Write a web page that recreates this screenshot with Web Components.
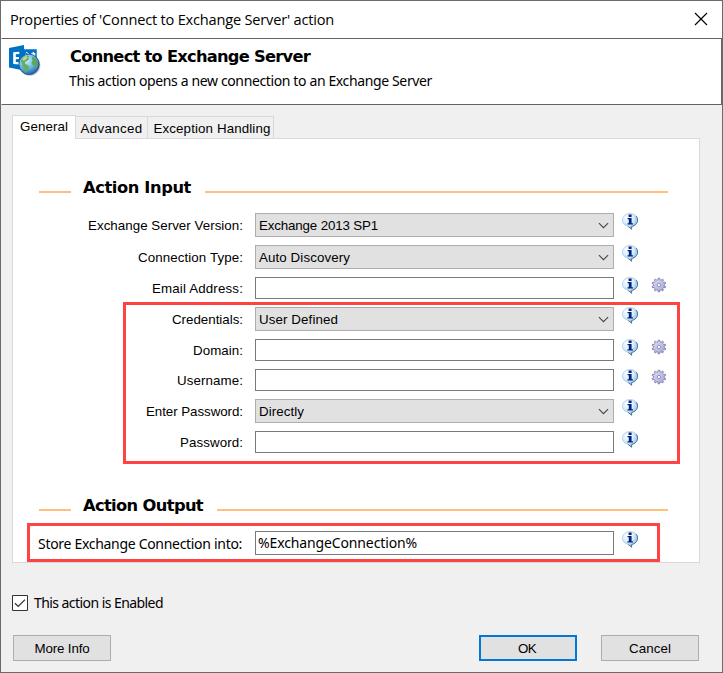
<!DOCTYPE html>
<html lang="en">
<head>
<meta charset="utf-8">
<title>Properties of 'Connect to Exchange Server' action</title>
<style>
html, body { margin: 0; height: 100%; overflow: hidden; }
body { font: 13.33px/16px "Liberation Sans", sans-serif; color: #000; }
.tahoma { font-family: "Noto Sans", sans-serif; font-size: 14px; }
.heading { font-family: "DejaVu Sans", sans-serif; font-weight: bold; font-size: 16.3px; }
</style>
</head>
<body>
<action-dialog>
  <fit-text slot="title" w="324" style="font-family:'Open Sans',sans-serif;font-size:14.6px">Properties of 'Connect to Exchange Server' action</fit-text>
  <fit-text slot="name" class="heading" w="240">Connect to Exchange Server</fit-text>
  <fit-text slot="about" class="tahoma" w="363" style="margin-left:-1px">This action opens a new connection to an Exchange Server</fit-text>

  <tab-label slot="tabs" active style="width:64px"><fit-text w="48">General</fit-text></tab-label>
  <tab-label slot="tabs" style="width:72px"><fit-text w="62">Advanced</fit-text></tab-label>
  <tab-label slot="tabs" style="width:126px"><fit-text w="117" style="margin-left:3px">Exception Handling</fit-text></tab-label>

  <section-title style="margin-top:38px"><fit-text class="heading" w="108">Action Input</fit-text></section-title>
  <form-rows style="margin-top:16px">
    <form-row><fit-text slot="label" w="155">Exchange Server Version:</fit-text><drop-down><fit-text w="119">Exchange 2013 SP1</fit-text></drop-down><info-icon></info-icon></form-row>
    <form-row><fit-text slot="label" w="105">Connection Type:</fit-text><drop-down><fit-text w="91">Auto Discovery</fit-text></drop-down><info-icon></info-icon></form-row>
    <form-row><fit-text slot="label" w="91">Email Address:</fit-text><text-field></text-field><info-icon></info-icon><gear-icon></gear-icon></form-row>
    <form-row><fit-text slot="label" w="71">Credentials:</fit-text><drop-down><fit-text w="79">User Defined</fit-text></drop-down><info-icon></info-icon></form-row>
    <form-row><fit-text slot="label" w="50">Domain:</fit-text><text-field></text-field><info-icon></info-icon><gear-icon></gear-icon></form-row>
    <form-row><fit-text slot="label" w="66">Username:</fit-text><text-field></text-field><info-icon></info-icon><gear-icon></gear-icon></form-row>
    <form-row><fit-text slot="label" w="97">Enter Password:</fit-text><drop-down><fit-text w="45">Directly</fit-text></drop-down><info-icon></info-icon></form-row>
    <form-row><fit-text slot="label" w="63">Password:</fit-text><text-field></text-field><info-icon></info-icon></form-row>
  </form-rows>
  <section-title style="margin-top:42px"><fit-text class="heading" w="120">Action Output</fit-text></section-title>
  <form-rows style="margin-top:16px">
    <form-row><fit-text slot="label" class="tahoma" w="204" style="margin-right:1px">Store Exchange Connection into:</fit-text><text-field tall><fit-text class="tahoma" w="159">%ExchangeConnection%</fit-text></text-field><info-icon></info-icon></form-row>
  </form-rows>

  <highlight-box style="left:122px;top:301px;width:557px;height:162px"></highlight-box>
  <highlight-box style="left:26px;top:522px;width:633px;height:39px"></highlight-box>

  <check-box slot="enabled"><fit-text class="tahoma" w="129">This action is Enabled</fit-text></check-box>
  <push-button slot="left"><fit-text w="55">More Info</fit-text></push-button>
  <push-button slot="right" primary><fit-text w="18">OK</fit-text></push-button>
  <push-button slot="right"><fit-text w="42">Cancel</fit-text></push-button>
</action-dialog>

<script>
const define = (name, html, extra) => customElements.define(name, class extends HTMLElement {
  constructor() {
    super();
    this.attachShadow({ mode: 'open' }).innerHTML = html;
  }
  connectedCallback() { if (extra) extra(this); }
});

/* A single line of text, tracked to span the width given in its w attribute. */
define('fit-text', `<style>:host{display:block;white-space:pre;flex:none}span{display:inline-block}</style><span><slot></slot></span>`, el => {
  const span = el.shadowRoot.querySelector('span');
  const target = Number(el.getAttribute('w'));
  const natural = span.getBoundingClientRect().width;
  if (natural) span.style.letterSpacing = ((target - natural) / el.textContent.length) + 'px';
  el.style.width = target + 'px';
});

define('tab-label', `<style>
:host{display:flex;box-sizing:border-box;height:22px;border:1px solid #d9d9d9;border-left:0;border-bottom:0;background:#f0f0f0;justify-content:center;padding-top:4px}
:host([active]){height:24px;background:#fff;border-left:1px solid #d9d9d9;margin-bottom:-1px;padding-top:3px}
</style><slot></slot>`);

define('section-title', `<style>
:host{display:grid;grid-template-columns:32px auto 1fr;height:20px;margin-left:26px;margin-right:31px}
i{height:2px;background:#ffc07d;align-self:end;margin-bottom:4px}
slot{display:block;margin:3px 14px 0 12px}
</style><i></i><slot></slot><i></i>`);

define('form-rows', `<style>:host{display:flex;flex-direction:column;gap:8px}</style><slot></slot>`);

define('form-row', `<style>
:host{display:flex;align-items:flex-start}
.label{width:230px;align-self:center;display:flex;justify-content:flex-end;margin-right:12px;padding-top:1px}
</style><div class="label"><slot name="label"></slot></div><slot></slot>`);

define('drop-down', `<style>
:host{display:flex;box-sizing:border-box;width:359px;height:24px;border:1px solid #adadad;background:#e1e1e1;align-items:center;justify-content:space-between;padding:1px 4px 0 3px}
svg{width:11px;height:7px}
</style><slot></slot><svg viewBox="0 0 11 7"><path d="M.9 1.1 5.5 5.7 10.1 1.1" fill="none" stroke="#454545" stroke-width="1.1"/></svg>`);

define('text-field', `<style>
:host{display:flex;box-sizing:border-box;width:359px;height:22px;border:1px solid #7a7a7a;background:#fff;align-items:center;padding-left:2px}
:host([tall]){height:24px}
</style><slot></slot>`);

define('info-icon', `<style>:host{display:block;width:16px;height:17px;margin-left:8px;flex:none}svg{display:block}</style>
<svg width="16" height="17" viewBox="0 0 16 17">
<defs><radialGradient id="g" cx=".36" cy=".28" r=".75"><stop offset="0" stop-color="#fff"/><stop offset=".5" stop-color="#d9edfc"/><stop offset="1" stop-color="#7fbbe8"/></radialGradient></defs>
<path d="M8 .5C3.700.5.400 3.400.400 7c0 3.200 2.400 5.500 5.600 6.300L9.600 16.200V13.500C13 12.800 15.600 10.300 15.600 7 15.600 3.400 12.300.500 8 .500Z" fill="url(#g)" stroke="#a5c6e2" stroke-width=".7"/>
<path d="M6.300 13.600 9.600 16.200V13.500C13 12.800 15.600 10.300 15.600 7c0-1.500-.500-2.800-1.400-3.900" fill="none" stroke="#4a6a8c" stroke-width=".9"/>
<path d="M6.600 1.500h3v2.400h-3zM5.500 5h4.100v5.200h1.300v1.200H5.500v-1.200h1.300V6.200H5.500z" fill="#08237c"/>
</svg>`);

define('gear-icon', `<style>:host{display:block;width:16px;height:16px;margin-left:13px;flex:none}svg{display:block}</style>
<svg width="16" height="16" viewBox="0 0 16 16">
<defs><linearGradient id="g" x2="1" y2="1"><stop offset="0" stop-color="#e3e3f6"/><stop offset="1" stop-color="#a2a2d2"/></linearGradient></defs>
<path id="p" stroke="#7474a6" stroke-width=".8" stroke-linejoin="round" fill="url(#g)"/>
<circle cx="7.900" cy="8" r="1.700" fill="#fff" stroke="#8888b5" stroke-width=".9"/>
</svg>`, el => {
  const teeth = 10, pts = [];
  for (let k = 0; k < teeth; k++) {
    for (const [offset, r] of [[-.28, 5.300], [-.17, 6.900], [.17, 6.900], [.28, 5.300]]) {
      const a = (k + offset) * 2 * Math.PI / teeth;
      pts.push((7.9 + r * Math.sin(a)).toFixed(2) + ' ' + (8 - r * Math.cos(a)).toFixed(2));
    }
  }
  el.shadowRoot.querySelector('#p').setAttribute('d', 'M' + pts.join('L') + 'Z');
});

define('highlight-box', `<style>:host{position:absolute;box-sizing:border-box;border:3px solid #ff4343;pointer-events:none}</style>`);

define('check-box', `<style>
:host{display:flex;align-items:center;gap:6px}
svg{display:block}
</style><svg width="16" height="16" viewBox="0 0 16 16"><path d="M.5.5h15v15H.5z" fill="#fff" stroke="#333"/><path d="M3 8.200 6.200 11.400 13 4.600" fill="none" stroke="#333" stroke-width="1.300"/></svg><slot></slot>`);

define('push-button', `<style>
:host{display:flex;box-sizing:border-box;width:98px;height:26px;border:1px solid #adadad;background:#e1e1e1;align-items:center;justify-content:center;padding-top:1px}
:host([primary]){border:2px solid #0078d7;padding-right:2px}
</style><slot></slot>`);

define('exchange-icon', `<style>:host{display:block;width:32px;height:32px}svg{display:block}</style>
<svg width="32" height="32" viewBox="0 0 32 32">
<defs>
<radialGradient id="sea" cx=".38" cy=".3" r=".75"><stop offset="0" stop-color="#d3f1fb"/><stop offset=".5" stop-color="#70bfe6"/><stop offset="1" stop-color="#1a5aa8"/></radialGradient>
<radialGradient id="sh"><stop offset=".8" stop-color="#333" stop-opacity=".45"/><stop offset="1" stop-color="#333" stop-opacity="0"/></radialGradient>
</defs>
<path d="M15.500 5H27v9H15.500z" fill="#fff" stroke="#0072c6" stroke-width="1.500"/>
<path d="M15.500 5H27v3h-3l-4 3-4.500-3z" fill="#0072c6"/><path d="M17 7l4 3 4-3" fill="none" stroke="#fff"/>
<path d="M0 3 15 0v25.500L0 22.500z" fill="#0072c6"/>
<path d="M4.200 7.300 10.300 6.800v2.300l-3.500.2V12l3.200-.1v2.200l-3.200.1v2.900l3.700.1v2.300L4.200 18.900z" fill="#fff"/>
<circle cx="21" cy="20.500" r="11" fill="url(#sh)"/>
<circle cx="20" cy="19.300" r="10.200" fill="url(#sea)" stroke="#17509a" stroke-width=".9"/>
<path d="M11.800 16C13 12.500 16 10.600 19 10.400l1.600 1.200-1.500 1.200 1 1.300-2.300 2.200-1.400.3-.6 2 2 1.200 2.500 1.700-.8 2.500-2 1.600-.6 2.200-1.300-.6-.5-3.600-1.600-2-.3-2.500z" fill="#67ad5e"/>
<path d="M23.500 11.500c2.500 1 4.300 3 5 5.500.3 2.500 0 4.300-1.200 6l-1.300.5-.6-3-1.900-.5-1.100-2.300 1.300-2.300-1-1.700z" fill="#5fa659"/>
<path d="M13.500 14c1-1.500 3-2.800 4.500-3l.5 1.500-2 2.500-2.500.8z" fill="#b5daa0"/>
</svg>`);

define('action-dialog', `<style>
:host{display:flex;flex-direction:column;box-sizing:border-box;width:723px;height:673px;border:1px solid #6b6b6b;background:#f0f0f0;position:relative}
header{box-sizing:border-box;height:37px;background:#fff;display:flex;justify-content:space-between;align-items:center;padding:0 14px 1px 9px}
header svg{display:block;margin-top:-1px}
.banner{box-sizing:border-box;height:67px;background:#fff;border:1px solid #636363;border-left-color:#fff;display:flex;padding:6px 7px;gap:29px}
.banner div{padding-top:4px}
.banner slot[name=about]{display:block;margin-top:8px}
nav{height:33px;display:flex;align-items:flex-end;padding-left:11px;position:relative}
main{box-sizing:border-box;width:688px;height:425px;margin-left:11px;border:1px solid #d9d9d9;background:#fff;overflow:hidden}
.enabled{display:flex;margin:32px 0 0 11px}
footer{display:flex;gap:24px;margin:24px 23px 0 12px}
footer slot[name=left]{display:block;margin-right:auto}
</style>
<header><slot name="title"></slot><svg width="14" height="14" viewBox="0 0 14 14"><path d="M1 1 13 13M13 1 1 13" stroke="#000" stroke-width="1.150"/></svg></header>
<section class="banner"><exchange-icon></exchange-icon><div><slot name="name"></slot><slot name="about"></slot></div></section>
<nav><slot name="tabs"></slot></nav>
<main><slot></slot></main>
<div class="enabled"><slot name="enabled"></slot></div>
<footer><slot name="left"></slot><slot name="right"></slot></footer>`);
</script>
</body>
</html>
